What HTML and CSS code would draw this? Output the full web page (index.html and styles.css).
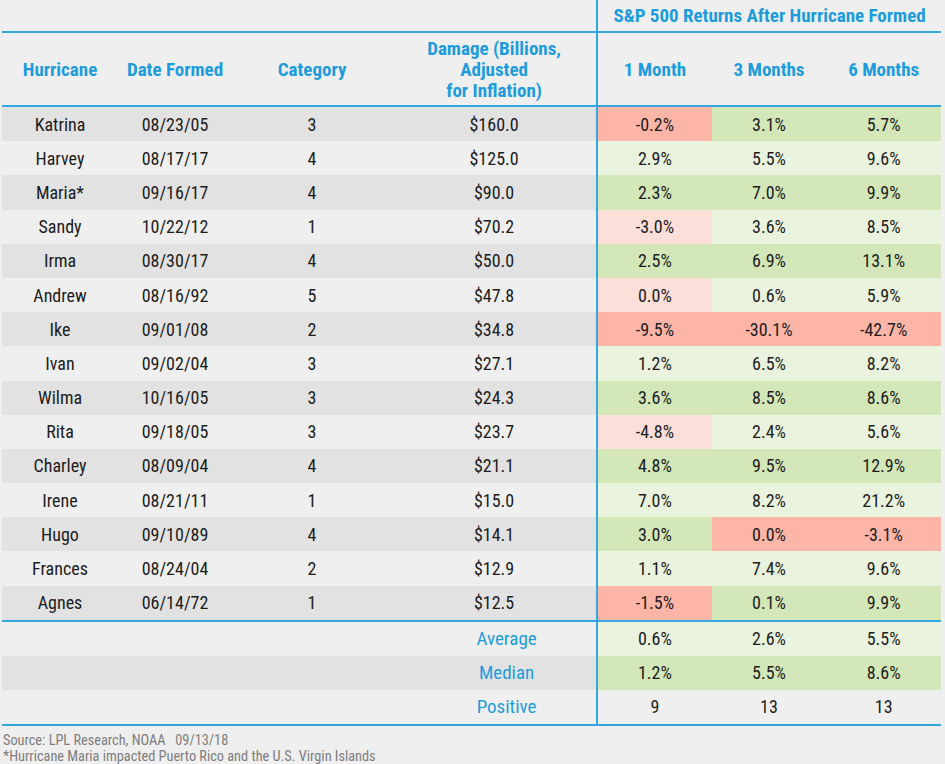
FILE: index.html
```html
<!DOCTYPE html>
<html>
<head>
<meta charset="utf-8">
<link rel="stylesheet" href="styles.css">
</head>
<body>
<div class="wrap">
<table class="tbl">
  <colgroup>
    <col class="c-name"><col class="c-date"><col class="c-cat"><col class="c-dmg">
    <col class="c-ret"><col class="c-ret"><col class="c-ret">
  </colgroup>
  <thead>
    <tr class="top">
      <th colspan="4"></th>
      <th colspan="3" class="vline title">S&amp;P 500 Returns After Hurricane Formed</th>
    </tr>
    <tr class="head">
      <th>Hurricane</th>
      <th>Date Formed</th>
      <th>Category</th>
      <th class="dmg">Damage (Billions,<br>Adjusted<br>for Inflation)</th>
      <th class="vline">1 Month</th>
      <th>3 Months</th>
      <th>6 Months</th>
    </tr>
  </thead>
  <tbody class="data">
    <tr class="odd"><td>Katrina</td><td>08/23/05</td><td>3</td><td>$160.0</td><td class="vline neg">-0.2%</td><td class="pos">3.1%</td><td class="pos">5.7%</td></tr>
    <tr class="even"><td>Harvey</td><td>08/17/17</td><td>4</td><td>$125.0</td><td class="vline pos">2.9%</td><td class="pos">5.5%</td><td class="pos">9.6%</td></tr>
    <tr class="odd"><td>Maria*</td><td>09/16/17</td><td>4</td><td>$90.0</td><td class="vline pos">2.3%</td><td class="pos">7.0%</td><td class="pos">9.9%</td></tr>
    <tr class="even"><td>Sandy</td><td>10/22/12</td><td>1</td><td>$70.2</td><td class="vline neg">-3.0%</td><td class="pos">3.6%</td><td class="pos">8.5%</td></tr>
    <tr class="odd"><td>Irma</td><td>08/30/17</td><td>4</td><td>$50.0</td><td class="vline pos">2.5%</td><td class="pos">6.9%</td><td class="pos">13.1%</td></tr>
    <tr class="even"><td>Andrew</td><td>08/16/92</td><td>5</td><td>$47.8</td><td class="vline neg">0.0%</td><td class="pos">0.6%</td><td class="pos">5.9%</td></tr>
    <tr class="odd"><td>Ike</td><td>09/01/08</td><td>2</td><td>$34.8</td><td class="vline neg">-9.5%</td><td class="neg">-30.1%</td><td class="neg">-42.7%</td></tr>
    <tr class="even"><td>Ivan</td><td>09/02/04</td><td>3</td><td>$27.1</td><td class="vline pos">1.2%</td><td class="pos">6.5%</td><td class="pos">8.2%</td></tr>
    <tr class="odd"><td>Wilma</td><td>10/16/05</td><td>3</td><td>$24.3</td><td class="vline pos">3.6%</td><td class="pos">8.5%</td><td class="pos">8.6%</td></tr>
    <tr class="even"><td>Rita</td><td>09/18/05</td><td>3</td><td>$23.7</td><td class="vline neg">-4.8%</td><td class="pos">2.4%</td><td class="pos">5.6%</td></tr>
    <tr class="odd"><td>Charley</td><td>08/09/04</td><td>4</td><td>$21.1</td><td class="vline pos">4.8%</td><td class="pos">9.5%</td><td class="pos">12.9%</td></tr>
    <tr class="even"><td>Irene</td><td>08/21/11</td><td>1</td><td>$15.0</td><td class="vline pos">7.0%</td><td class="pos">8.2%</td><td class="pos">21.2%</td></tr>
    <tr class="odd"><td>Hugo</td><td>09/10/89</td><td>4</td><td>$14.1</td><td class="vline pos">3.0%</td><td class="neg">0.0%</td><td class="neg">-3.1%</td></tr>
    <tr class="even"><td>Frances</td><td>08/24/04</td><td>2</td><td>$12.9</td><td class="vline pos">1.1%</td><td class="pos">7.4%</td><td class="pos">9.6%</td></tr>
    <tr class="odd last"><td>Agnes</td><td>06/14/72</td><td>1</td><td>$12.5</td><td class="vline neg">-1.5%</td><td class="pos">0.1%</td><td class="pos">9.9%</td></tr>
  </tbody>
  <tbody class="summary">
    <tr class="even"><td colspan="3"></td><td class="label">Average</td><td class="vline pos">0.6%</td><td class="pos">2.6%</td><td class="pos">5.5%</td></tr>
    <tr class="odd"><td colspan="3"></td><td class="label">Median</td><td class="vline pos">1.2%</td><td class="pos">5.5%</td><td class="pos">8.6%</td></tr>
    <tr class="plain last"><td colspan="3"></td><td class="label">Positive</td><td class="vline">9</td><td>13</td><td>13</td></tr>
  </tbody>
</table>
<div class="notes">
  <p>Source: LPL Research, NOAA&nbsp;&nbsp;&nbsp;09/13/18</p>
  <p>*Hurricane Maria impacted Puerto Rico and the U.S. Virgin Islands</p>
</div>
</div>
</body>
</html>
```

FILE: styles.css
```css
html, body {
  margin: 0;
  padding: 0;
  background: #efefef;
}
body {
  font-family: "Liberation Sans Narrow", "Roboto Condensed", "DejaVu Sans Condensed", "Liberation Sans", sans-serif;
  font-stretch: condensed;
  color: #1c1c1c;
}
.wrap {
  padding-left: 2px;
  width: 939px;
}
.tbl {
  border-collapse: collapse;
  table-layout: fixed;
  width: 939px;
}
.c-name { width: 116px; }
.c-date { width: 114px; }
.c-cat { width: 160px; }
.c-dmg { width: 205px; }
.c-ret { width: 114.6px; }

th, td {
  padding: 0;
  text-align: center;
  vertical-align: middle;
}
th {
  color: #1d9cdb;
  font-weight: bold;
  font-size: 19px;
}
.top th {
  height: 31px;
  border-bottom: 2px solid #35a7df;
}
.title { font-size: 19px; }
.head th {
  height: 72px;
  border-bottom: 2px solid #35a7df;
  line-height: 21px;
}
.vline {
  border-left: 2px solid #35a7df;
}
td {
  font-size: 18px;
  height: 34.2px;
}
.odd td { background: #e2e2e2; }
.even td { background: #efefef; }
.plain td { background: #efefef; }
.odd td.pos { background: #d3e7b8; }
.even td.pos { background: #eaf3de; }
.odd td.neg { background: #fcb5a7; }
.even td.neg { background: #fddfd9; }
.data tr.last td { border-bottom: 2px solid #35a7df; }
.summary td { height: 34px; }
.summary tr.last td { border-bottom: 2px solid #35a7df; }
.summary .label {
  color: #1d9cdb;
  font-size: 19px;
  padding-left: 25px;
}
.notes {
  padding: 6px 0 0 1px;
  color: #7d7d7d;
  font-size: 14.3px;
  line-height: 16px;
}
.notes p { margin: 0; }
```
